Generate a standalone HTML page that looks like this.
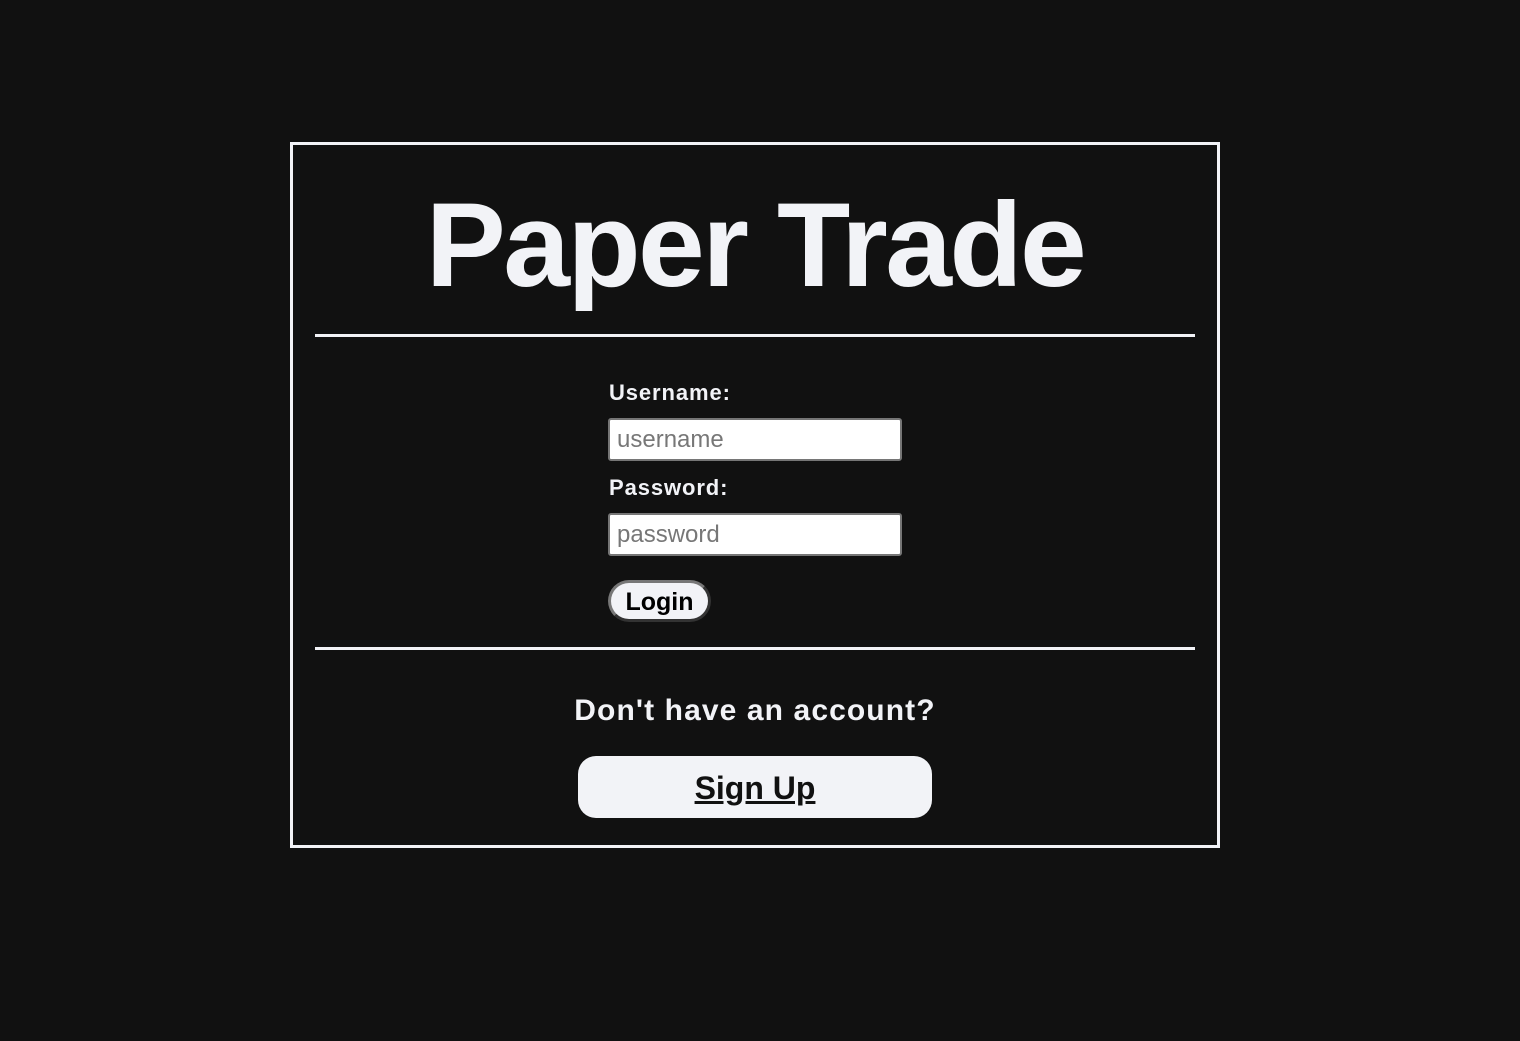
<!DOCTYPE html>
<html><head><meta charset="utf-8"><style>
html,body{margin:0;padding:0;background:#111;width:1520px;height:1041px;overflow:hidden;font-family:"Liberation Sans",Arial,sans-serif;}
.box{position:absolute;left:290px;top:142px;width:924px;height:700px;border:3px solid #f2f3f7;}
.t{position:absolute;left:0;width:1520px;text-align:center;color:#f2f3f7;font-weight:bold;white-space:nowrap}
.hr{position:absolute;left:315px;width:880px;height:3px;background:#f2f3f7}
.lbl{position:absolute;left:609px;color:#f2f3f7;font-weight:bold;font-size:22px;letter-spacing:0.9px}
.in{position:absolute;left:608px;background:#fff;border:2px solid #767676;border-radius:3px;box-sizing:border-box;width:294px;height:43px;color:#777;font-size:24px;padding-left:7px;line-height:39px}
</style></head><body>
<div class="box"></div>
<div class="t" style="top:170px;left:-5px;font-size:120px;line-height:150px;letter-spacing:-2.6px;">Paper Trade</div>
<div class="hr" style="top:334px"></div>
<div class="lbl" style="top:380px">Username:</div>
<div class="in" style="top:418px">username</div>
<div class="lbl" style="top:475px">Password:</div>
<div class="in" style="top:513px">password</div>
<div style="position:absolute;left:608px;top:580px;width:103px;height:42px;box-sizing:border-box;border:3px solid;border-color:#777 #333 #333 #777;border-radius:21px;background:#f2f3f7;color:#000;font-weight:bold;font-size:25px;text-align:center;line-height:38px;">Login</div>
<div class="hr" style="top:647px"></div>
<div class="t" style="top:692px;left:-5px;font-size:30px;line-height:38px;letter-spacing:1.1px;">Don't have an account?</div>
<div style="position:absolute;left:578px;top:756px;width:354px;height:62px;border-radius:18px;background:#f2f3f7;color:#111;font-weight:bold;font-size:32px;text-align:center;line-height:64px;text-decoration:underline;">Sign Up</div>
</body></html>
